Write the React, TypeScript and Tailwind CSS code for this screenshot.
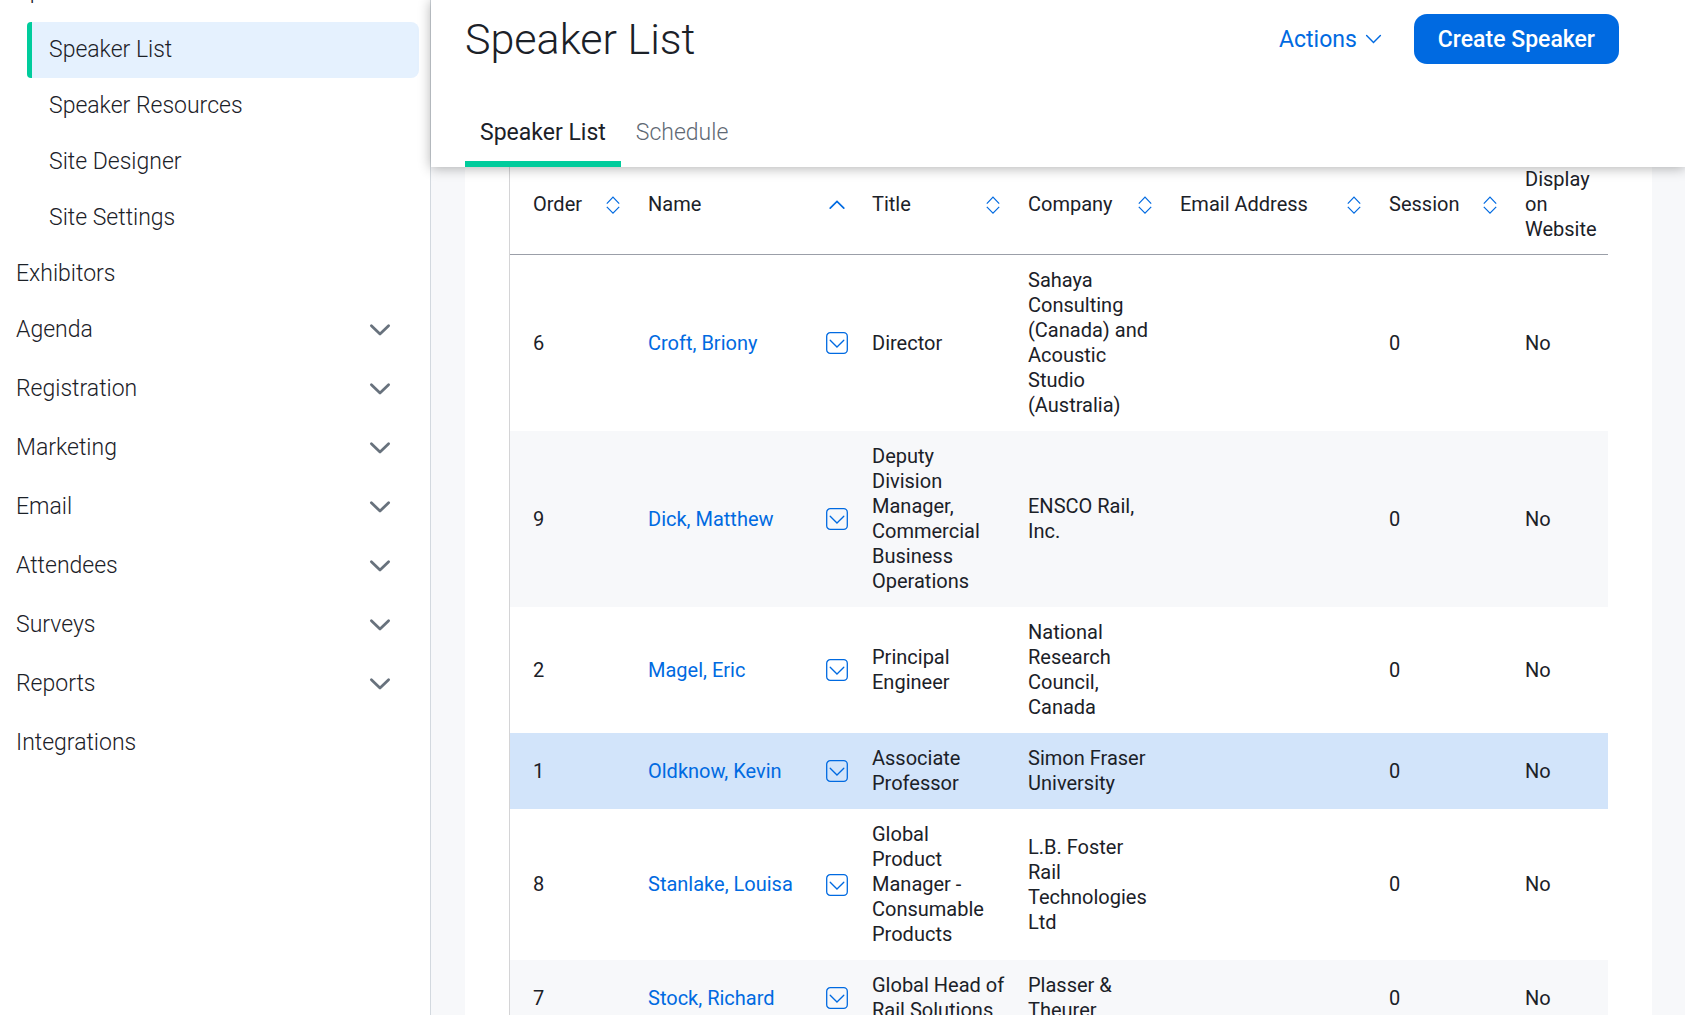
import type { ReactNode } from "react";

type NavItem = { label: string; expandable?: boolean };

const speakerPages = ["Speaker List", "Speaker Resources", "Site Designer", "Site Settings"];

const sections: NavItem[] = [
  { label: "Agenda", expandable: true },
  { label: "Registration", expandable: true },
  { label: "Marketing", expandable: true },
  { label: "Email", expandable: true },
  { label: "Attendees", expandable: true },
  { label: "Surveys", expandable: true },
  { label: "Reports", expandable: true },
  { label: "Integrations" },
];

type Speaker = { order: number; name: string; title: string; company: string; selected?: boolean };

const speakers: Speaker[] = [
  {
    order: 6,
    name: "Croft, Briony",
    title: "Director",
    company: "Sahaya\nConsulting\n(Canada) and\nAcoustic\nStudio\n(Australia)",
  },
  {
    order: 9,
    name: "Dick, Matthew",
    title: "Deputy\nDivision\nManager,\nCommercial\nBusiness\nOperations",
    company: "ENSCO Rail,\nInc.",
  },
  {
    order: 2,
    name: "Magel, Eric",
    title: "Principal\nEngineer",
    company: "National\nResearch\nCouncil,\nCanada",
  },
  {
    order: 1,
    name: "Oldknow, Kevin",
    title: "Associate\nProfessor",
    company: "Simon Fraser\nUniversity",
    selected: true,
  },
  {
    order: 8,
    name: "Stanlake, Louisa",
    title: "Global\nProduct\nManager -\nConsumable\nProducts",
    company: "L.B. Foster\nRail\nTechnologies\nLtd",
  },
  {
    order: 7,
    name: "Stock, Richard",
    title: "Global Head of\nRail Solutions",
    company: "Plasser &\nTheurer",
  },
];

function NavChevron() {
  return (
    <svg width="22" height="22" viewBox="0 0 22 22" fill="none" stroke="#68727d" strokeWidth="2.8" strokeLinecap="round" strokeLinejoin="round" aria-hidden="true">
      <path d="M2.4 6.8 11 15l8.6-8.2" />
    </svg>
  );
}

function SortBoth() {
  return (
    <svg width="22" height="22" viewBox="0 0 22 22" fill="none" stroke="#006ae1" strokeWidth="1.2" aria-hidden="true">
      <path d="M4.8 9.6 11 3.2l6.2 6.4M4.8 12.8 11 19.2l6.2-6.4" />
    </svg>
  );
}

function SortUp() {
  return (
    <svg width="22" height="22" viewBox="0 0 22 22" fill="none" stroke="#006ae1" strokeWidth="1.7" strokeLinecap="round" aria-hidden="true">
      <path d="M4.2 14.2 11 7.4l6.8 6.8" />
    </svg>
  );
}

function BoxedChevron() {
  return (
    <svg width="22" height="22" viewBox="0 0 22 22" fill="none" stroke="#006ae1" strokeWidth="1.3" strokeLinecap="round" aria-hidden="true">
      <rect x="0.7" y="0.7" width="20.6" height="20.6" rx="3.6" />
      <path d="M4.2 8.2 11 15l6.8-6.8" />
    </svg>
  );
}

function HeadCell({ label, sort }: { label: string; sort?: ReactNode }) {
  return (
    <th scope="col" className="px-3 pb-3 text-left align-middle font-normal first:pl-[23px]">
      {sort ? (
        <button type="button" className="flex w-full items-center justify-between whitespace-nowrap text-left">
          {label}
          {sort}
        </button>
      ) : (
        label
      )}
    </th>
  );
}

export default function App() {
  return (
    <div className="flex h-screen overflow-hidden bg-[#f7f8fa] font-['Roboto',sans-serif] text-[#1b2128]">
      <aside className="w-[431px] shrink-0 overflow-hidden border-r border-[#d3d9df] bg-white text-[23px] font-light">
        <nav aria-label="Event" className="-mt-[37px]">
          <a href="#speakers" className="block h-[59px] pl-4 leading-[56px]">
            Speakers
          </a>
          <ul className="pr-[11px] pl-[27px]">
            {speakerPages.map((page, index) => (
              <li key={page}>
                <a
                  href="#page"
                  className={
                    index === 0
                      ? "block rounded-l-[4px] rounded-r-lg border-l-[5px] border-[#00cc9c] bg-[#e5f1fe] pl-[17px] leading-[56px]"
                      : "block pl-[22px] leading-[56px]"
                  }
                >
                  {page}
                </a>
              </li>
            ))}
          </ul>
          <a href="#exhibitors" className="block pl-4 leading-[56px]">
            Exhibitors
          </a>
          <ul>
            {sections.map((item) => (
              <li key={item.label} className="flex h-[59px] justify-between pr-[39px] pl-4">
                <a href="#section" className="leading-[56px]">
                  {item.label}
                </a>
                {item.expandable && (
                  <button type="button" aria-label={`Expand ${item.label}`} className="flex h-14 items-center">
                    <NavChevron />
                  </button>
                )}
              </li>
            ))}
          </ul>
        </nav>
      </aside>

      <main className="min-w-0 flex-1">
        <header className="relative z-10 flex h-[167px] flex-col justify-between bg-white pl-[34px] shadow-[0_1px_12px_rgba(0,0,0,0.32)]">
          <div className="flex items-center justify-between pt-[14px] pr-[66px]">
            <h1 className="text-[43px] leading-[50px] font-light">Speaker List</h1>
            <div className="flex items-center gap-8 text-[23px]">
              <button type="button" className="flex h-[50px] items-center gap-2 pt-0.5 text-[#006ae1]">
                Actions
                <svg width="17" height="17" viewBox="0 0 17 17" fill="none" stroke="currentColor" strokeWidth="1.4" strokeLinecap="round" aria-hidden="true">
                  <path d="M1.6 3.6 8.5 10.6l6.9-7" />
                </svg>
              </button>
              <button type="button" className="h-[50px] rounded-[13px] bg-[#006ae1] px-6 pt-0.5 font-medium text-white">
                Create Speaker
              </button>
            </div>
          </div>
          <div role="tablist" className="flex text-[23px] leading-[30px]">
            <button type="button" role="tab" aria-selected="true" className="border-b-[6px] border-[#00cc9c] px-[15px] pb-[13px]">
              Speaker List
            </button>
            <button type="button" role="tab" aria-selected="false" className="border-b-[6px] border-transparent px-[15px] pb-[13px] font-light text-[#5f6974]">
              Schedule
            </button>
          </div>
        </header>

        <section className="mr-[33px] ml-[34px] bg-white px-11">
          <table className="w-full table-fixed border-separate border-spacing-0 border-l border-[#d4d4d6] text-[20px] leading-[25px]">
            <colgroup>
              <col className="w-[126px]" />
              <col className="w-[224px]" />
              <col className="w-[156px]" />
              <col className="w-[152px]" />
              <col className="w-[209px]" />
              <col className="w-[136px]" />
              <col className="w-[95px]" />
            </colgroup>
            <thead className="[&_th]:border-b [&_th]:border-[#9b9fa8]">
              <tr>
                <HeadCell label="Order" sort={<SortBoth />} />
                <HeadCell label="Name" sort={<SortUp />} />
                <HeadCell label="Title" sort={<SortBoth />} />
                <HeadCell label="Company" sort={<SortBoth />} />
                <HeadCell label="Email Address" sort={<SortBoth />} />
                <HeadCell label="Session" sort={<SortBoth />} />
                <HeadCell label="Display on Website" />
              </tr>
            </thead>
            <tbody>
              {speakers.map((speaker) => (
                <tr
                  key={speaker.order}
                  className={speaker.selected ? "bg-[#d2e4fa]" : "even:bg-[#f7f8fa]"}
                >
                  <td className="py-[13px] pr-3 pl-[23px]">{speaker.order}</td>
                  <td className="px-3 py-[13px]">
                    <div className="flex items-center justify-between whitespace-nowrap">
                      <a href="#speaker" className="text-[#006ae1]">
                        {speaker.name}
                      </a>
                      <button type="button" aria-label={`Options for ${speaker.name}`}>
                        <BoxedChevron />
                      </button>
                    </div>
                  </td>
                  <td className="px-3 py-[13px] whitespace-pre">{speaker.title}</td>
                  <td className="px-3 py-[13px] whitespace-pre">{speaker.company}</td>
                  <td className="px-3 py-[13px]" />
                  <td className="px-3 py-[13px]">0</td>
                  <td className="px-3 py-[13px]">No</td>
                </tr>
              ))}
            </tbody>
          </table>
        </section>
      </main>
    </div>
  );
}
